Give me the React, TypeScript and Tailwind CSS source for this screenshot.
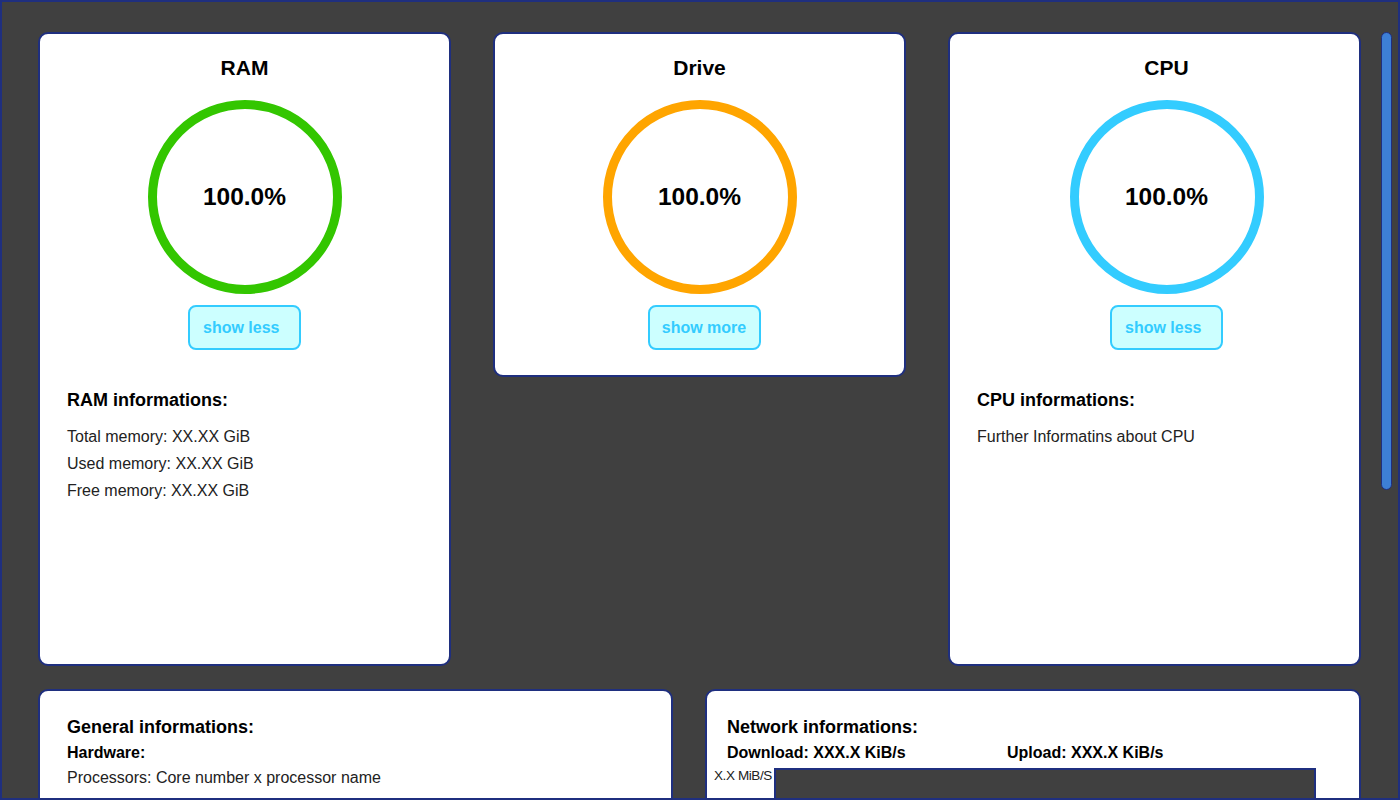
import React from 'react'

type Gauge = {
  title: string
  color: string
  expanded: boolean
  heading?: string
  lines?: string[]
}

const gauges: Gauge[] = [
  {
    title: 'RAM',
    color: '#33c600',
    expanded: true,
    heading: 'RAM informations:',
    lines: ['Total memory: XX.XX GiB', 'Used memory: XX.XX GiB', 'Free memory: XX.XX GiB'],
  },
  { title: 'Drive', color: '#ffa500', expanded: false },
  {
    title: 'CPU',
    color: '#33ccff',
    expanded: true,
    heading: 'CPU informations:',
    lines: ['Further Informatins about CPU'],
  },
]

const Ring = ({ color }: { color: string }) => (
  <div className="relative mt-[18px] h-[194px] w-[194px]">
    <svg width="194" height="194" viewBox="0 0 194 194" className="absolute inset-0">
      <circle cx="97" cy="97" r="92.5" fill="none" stroke={color} strokeWidth="9" />
    </svg>
    <div className="absolute inset-0 flex items-center justify-center text-[24.5px] font-bold text-black">
      100.0%
    </div>
  </div>
)

const GaugeCard = ({ g }: { g: Gauge }) => (
  <div
    className={
      g.expanded
        ? 'flex h-[634px] flex-col rounded-[10px] border-2 border-[#1f2f7f] bg-white pt-[20px]'
        : 'flex flex-col rounded-[10px] border-2 border-[#1f2f7f] bg-white pt-[20px] pb-[25px]'
    }
  >
    <div className={g.title === 'CPU' ? 'flex flex-col items-center pl-[24px]' : 'flex flex-col items-center'}>
      <h2 className="text-[21px] leading-[28px] font-bold text-black">{g.title}</h2>
      <Ring color={g.color} />
      <button
        className={
          g.expanded
            ? 'mt-[11px] h-[45px] w-[113px] rounded-[8px] border-2 border-[#33ccff] bg-[#ccffff] px-[13px] text-left text-[16px] font-bold whitespace-nowrap text-[#33ccff]'
            : 'mt-[11px] ml-[9px] h-[45px] w-[113px] rounded-[8px] border-2 border-[#33ccff] bg-[#ccffff] px-0 text-center text-[16px] font-bold whitespace-nowrap text-[#33ccff]'
        }
      >
        {g.expanded ? 'show less' : 'show more'}
      </button>
    </div>
    {g.expanded && (
      <div className="mt-[40px] w-full px-[27px]">
        <h3 className="text-[18px] leading-[20px] font-bold text-black">{g.heading}</h3>
        <div className="mt-[13px]">
          {g.lines?.map((l) => (
            <p key={l} className="text-[16px] leading-[27px] text-[#222]">
              {l}
            </p>
          ))}
        </div>
      </div>
    )}
  </div>
)

export default function App() {
  return (
    <div className="relative h-screen w-full border-2 border-[#1f2f7f] bg-[#404040] pr-[6px] font-['Liberation_Sans',Arial,sans-serif]">
      <div className="h-full overflow-y-auto">
        <div className="ml-[36px] w-[1323px] pt-[30px] pb-[32px]">
          <div className="grid grid-cols-3 items-start gap-[42px]">
            {gauges.map((g) => (
              <GaugeCard key={g.title} g={g} />
            ))}
          </div>

          <div className="mt-[23px] grid grid-cols-[635px_656px] gap-[32px]">
            <div className="h-[560px] rounded-[10px] border-2 border-[#1f2f7f] bg-white px-[27px] pt-[26px]">
              <h3 className="text-[18px] leading-[20px] font-bold text-black">General informations:</h3>
              <h4 className="mt-[6px] text-[16px] leading-[20px] font-bold text-black">Hardware:</h4>
              <p className="mt-[5px] text-[16px] leading-[20px] text-[#222]">
                Processors: Core number x processor name
              </p>
            </div>

            <div className="h-[560px] rounded-[10px] border-2 border-[#1f2f7f] bg-white pt-[26px]">
              <h3 className="pl-[20px] text-[18px] leading-[20px] font-bold text-black">Network informations:</h3>
              <div className="mt-[6px] flex pl-[20px] text-[16px] leading-[20px] font-bold text-black">
                <span className="w-[280px]">Download: XXX.X KiB/s</span>
                <span>Upload: XXX.X KiB/s</span>
              </div>
              <div className="mt-[5px] flex pl-[7px]">
                <span className="w-[60px] text-[13.5px] leading-[16px] tracking-[-0.4px] text-[#222]">X.X MiB/S</span>
                <div className="h-[260px] w-[542px] border-2 border-[#1f2f7f] bg-[#404040]" />
              </div>
            </div>
          </div>
        </div>
      </div>
      {/* scrollbar thumb */}
      <div className="absolute top-[30px] right-[6px] h-[458px] w-[11px] rounded-full border border-[#1f2f7f] bg-[#3d7fd6]" />
    </div>
  )
}
